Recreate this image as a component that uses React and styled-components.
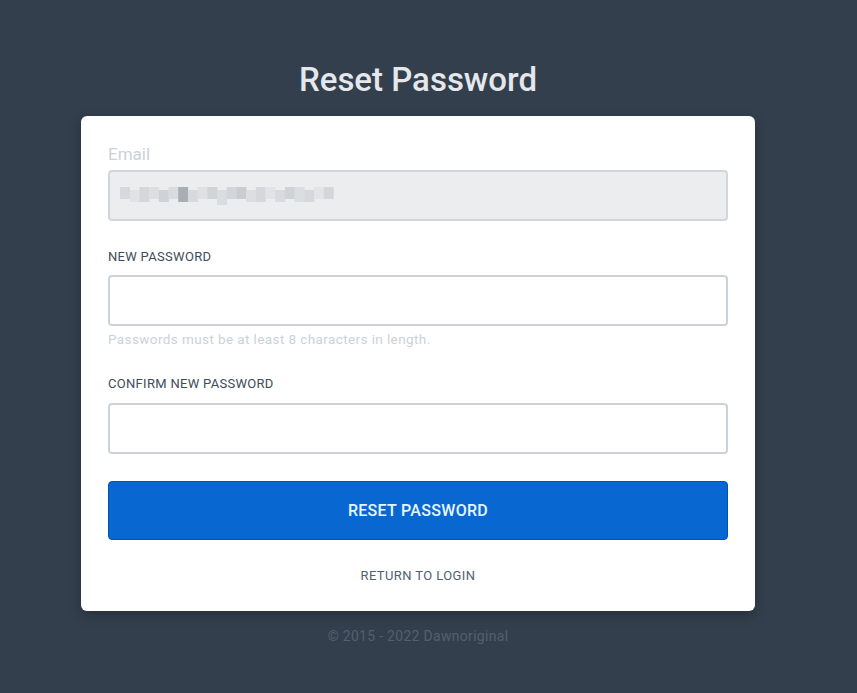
import React from 'react';
import styled, { createGlobalStyle } from 'styled-components';

const GlobalStyle = createGlobalStyle`
  html, body {
    margin: 0;
    padding: 0;
    background: #333f4d;
    font-family: Roboto, "Liberation Sans", sans-serif;
  }
`;

const blurCells = [
  '#d5d8dc', '#e0e2e5', '#d3d6da', '#dcdfe2', '#cfd3d7', '#d8dbdf', '#a9adb4', '#d6d9dd',
  '#dee0e3', '#d0d4d8', '#dadde0', '#d2d5d9', '#c9cdd2', '#dcdfe2', '#d4d7db', '#e1e3e6',
  '#d7dade', '#cfd2d7', '#dbdee1', '#d5d8dc', '#e2e4e7', '#d3d6da',
];

const App = () => {
  return (
    <Page>
      <GlobalStyle />
      <Title>Reset Password</Title>
      <Card>
        <Field gap={28}>
          <EmailLabel>Email</EmailLabel>
          <DisabledInput>
            <svg width="214" height="18" viewBox="0 0 214 18">
              {blurCells.map((c, i) => (
                <rect key={i} x={i * 9.7} y={i % 3 === 1 ? 3 : 0} width="10" height={i % 4 === 2 ? 15 : 12} fill={c} />
              ))}
            </svg>
          </DisabledInput>
        </Field>
        <Field gap={29}>
          <Label>New Password</Label>
          <Input type="password" />
          <Hint>Passwords must be at least 8 characters in length.</Hint>
        </Field>
        <Field gap={27}>
          <Label spaced>Confirm New Password</Label>
          <Input type="password" />
        </Field>
        <Button>Reset Password</Button>
        <ReturnLink>Return to Login</ReturnLink>
      </Card>
      <Footer>© 2015 - 2022 Dawnoriginal</Footer>
    </Page>
  );
};

export default App;

const Page = styled.div`
  min-height: 693px;
  display: flex;
  flex-direction: column;
  align-items: center;
  padding: 60px 21px 0 0;
  box-sizing: border-box;
`;

const Title = styled.h2`
  margin: 0 0 16px;
  font-size: 33px;
  font-weight: 500;
  color: #e4e7eb;
  line-height: 40px;
`;

const Card = styled.div`
  width: 674px;
  box-sizing: border-box;
  background: #fff;
  border-radius: 6px;
  box-shadow: 0 4px 12px rgba(0, 0, 0, 0.25);
  padding: 28px 27px 27px;
  display: flex;
  flex-direction: column;
`;

const Field = styled.div`
  display: flex;
  flex-direction: column;
  margin-bottom: ${p => p.gap}px;
`;

const EmailLabel = styled.label`
  font-size: 17px;
  color: #cbd2d9;
  line-height: 20px;
  margin-bottom: 6px;
`;

const Label = styled.label`
  font-size: 13px;
  color: #3e4c59;
  text-transform: uppercase;
  letter-spacing: 0.3px;
  line-height: 16px;
  margin-bottom: ${p => (p.spaced ? 11 : 10)}px;
`;

const DisabledInput = styled.div`
  height: 51px;
  box-sizing: border-box;
  border: 2px solid #d2d6db;
  border-radius: 4px;
  background: #ebedef;
  display: flex;
  align-items: center;
  padding: 0 10px;
`;

const Input = styled.input`
  height: 51px;
  box-sizing: border-box;
  border: 2px solid #cbd2d9;
  border-radius: 4px;
  background: #fff;
  outline: none;
  padding: 0 12px;
  font-size: 15px;
`;

const Hint = styled.p`
  margin: 5px 0 0;
  font-size: 13.5px;
  color: #cbd2d9;
  letter-spacing: 0.4px;
  line-height: 16px;
`;

const Button = styled.button`
  height: 59px;
  border: 1px solid #0552b5;
  border-radius: 4px;
  background: #0967d2;
  color: #e6f6ff;
  font-family: inherit;
  font-size: 16px;
  font-weight: 500;
  text-transform: uppercase;
  letter-spacing: 0.3px;
  cursor: pointer;
`;

const ReturnLink = styled.a`
  margin-top: 28px;
  text-align: center;
  font-size: 13px;
  color: #52606d;
  text-transform: uppercase;
  letter-spacing: 0.4px;
  line-height: 16px;
`;

const Footer = styled.p`
  margin: 17px 0 0;
  font-size: 14px;
  color: #52606d;
  letter-spacing: 0.3px;
`;
